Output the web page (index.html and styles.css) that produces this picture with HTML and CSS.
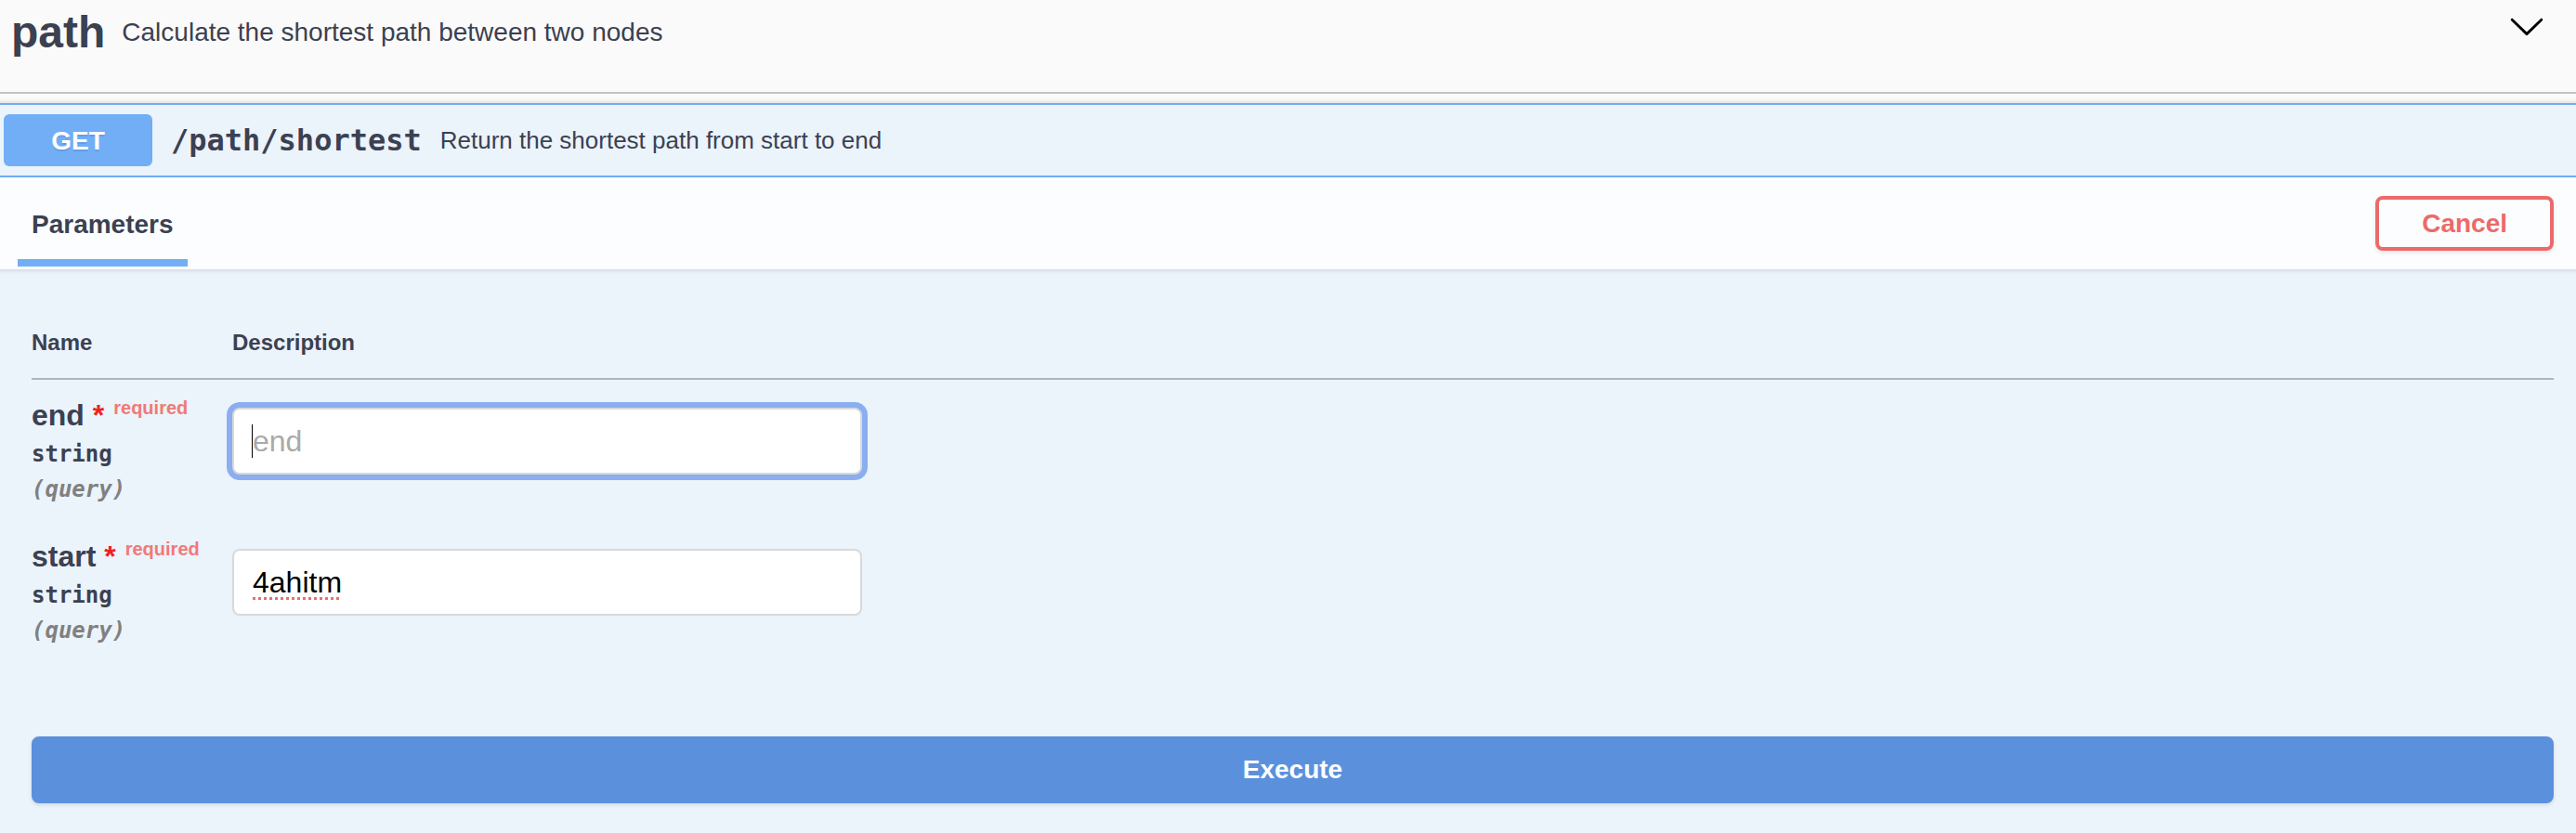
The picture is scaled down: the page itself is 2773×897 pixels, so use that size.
FILE: index.html
```html
<!DOCTYPE html>
<html lang="en">
<head>
<meta charset="utf-8">
<title>path - Swagger</title>
<link rel="stylesheet" href="styles.css">
</head>
<body>
  <section class="tag">
    <h3 class="tag-title">
      <span class="tag-name">path</span>
      <small class="tag-desc">Calculate the shortest path between two nodes</small>
    </h3>
    <svg class="arrow" width="40" height="40" viewBox="0 0 20 20" aria-hidden="true">
      <path d="M17.418 6.109c.272-.268.709-.268.979 0s.271.701 0 .969l-7.908 7.83c-.27.268-.707.268-.979 0l-7.908-7.83c-.27-.268-.27-.701 0-.969.271-.268.709-.268.979 0L10 13.25l7.418-7.141z"/>
    </svg>
  </section>

  <div class="opblock">
    <div class="summary">
      <span class="method">GET</span>
      <span class="sum-path">/path/shortest</span>
      <span class="sum-desc">Return the shortest path from start to end</span>
    </div>

    <div class="section-header">
      <div class="tab">
        <h4 class="tab-label">Parameters</h4>
        <span class="tab-bar"></span>
      </div>
      <button class="btn-cancel" type="button">Cancel</button>
    </div>

    <div class="table-container">
      <div class="params">
        <div class="th">Name</div>
        <div class="th">Description</div>

        <div class="td">
          <div class="pname">end<span class="req">&nbsp;*</span><span class="req-label">required</span></div>
          <div class="ptype">string</div>
          <div class="pin">(query)</div>
        </div>
        <div class="td">
          <div class="field field-focus">
            <input class="input" type="text" placeholder="end" spellcheck="false">
            <span class="caret"></span>
          </div>
        </div>

        <div class="td">
          <div class="pname">start<span class="req">&nbsp;*</span><span class="req-label">required</span></div>
          <div class="ptype">string</div>
          <div class="pin">(query)</div>
        </div>
        <div class="td">
          <div class="field">
            <input class="input spell" type="text" value="4ahitm" spellcheck="false">
          </div>
        </div>
      </div>
    </div>

    <div class="execute-wrapper">
      <button class="btn-execute" type="button">Execute</button>
    </div>
  </div>
</body>
</html>
```

FILE: styles.css
```css
html, body {
  margin: 0;
  overflow: hidden;
}

body {
  width: 2773px;
  height: 897px;
  background: #fafafa;
  font-family: "Liberation Sans", Arial, sans-serif;
  color: #3b4151;
}

/* ---------- tag header ---------- */
.tag {
  display: flex;
  align-items: flex-start;
  padding: 7px 33px 36px 12px;
  border-bottom: 2px solid #c1c3c7;
}

.tag-title {
  display: flex;
  align-items: center;
  flex: 1;
  height: 56px;
  margin: 0;
}

.tag-name {
  font: bold 48px/56px "Liberation Sans", Arial, sans-serif;
}

.tag-desc {
  margin-left: 18px;
  font: 28px/32px "Liberation Sans", Arial, sans-serif;
}

.arrow {
  flex: none;
  margin-top: 1px;
  fill: #000;
}

/* ---------- operation block ---------- */
.opblock {
  margin: 10px -18px 0 -8px;
  border: 2px solid #71aef6;
  background: #ebf3fb;
  box-shadow: 0 0 6px rgba(0, 0, 0, .19);
}

.summary {
  display: flex;
  align-items: center;
  padding: 10px;
  border-bottom: 2px solid #71aef6;
}

.method {
  min-width: 160px;
  padding: 13px 0 11px;
  border-radius: 6px;
  background: #71aef6;
  color: #fff;
  text-align: center;
  font: bold 28px/32px "Liberation Sans", Arial, sans-serif;
  text-shadow: 0 2px 0 rgba(0, 0, 0, .1);
}

.sum-path {
  padding: 0 20px;
  font: bold 32px/40px "DejaVu Sans Mono", monospace;
}

.sum-desc {
  font: 26px/30px "Liberation Sans", Arial, sans-serif;
}

/* ---------- section header ---------- */
.section-header {
  display: flex;
  align-items: center;
  padding: 0 40px;
  background: rgba(255, 255, 255, .8);
  box-shadow: 0 2px 4px rgba(0, 0, 0, .1);
}

.tab {
  display: flex;
  flex-direction: column;
  align-items: center;
  padding: 35px 0 3px;
}

.tab-label {
  margin: 0;
  font: bold 28px/32px "Liberation Sans", Arial, sans-serif;
}

.tab-bar {
  display: block;
  width: 120%;
  height: 8px;
  margin-top: 21px;
  background: #71aef6;
}

.btn-cancel {
  margin-left: auto;
  padding: 10px 46px;
  border: 4px solid #ec6a6a;
  border-radius: 8px;
  background: transparent;
  color: #ec6a6a;
  font: bold 28px/31px "Liberation Sans", Arial, sans-serif;
  box-shadow: 0 2px 4px rgba(0, 0, 0, .1);
}

/* ---------- parameters table ---------- */
.table-container {
  padding: 40px 40px 40px;
}

.params {
  display: grid;
  grid-template-columns: 216px 1fr;
}

.th {
  padding: 25px 0 24px;
  border-bottom: 2px solid #aeb5c1;
  font: bold 24px/28px "Liberation Sans", Arial, sans-serif;
}

.td {
  padding: 20px 0;
}

.pname {
  font: bold 32px/36px "Liberation Sans", Arial, sans-serif;
}

.req {
  color: #f0221e;
}

.req-label {
  padding-left: 10px;
  font-size: 20px;
  line-height: 20px;
  vertical-align: 12px;
  color: #f07a76;
}

.ptype {
  padding: 10px 0;
  font: bold 24px/28px "DejaVu Sans Mono", monospace;
}

.pin {
  font: italic bold 24px/28px "DejaVu Sans Mono", monospace;
  color: #808080;
}

.field {
  position: relative;
  width: 678px;
  margin-top: 10px;
  border-radius: 8px;
}

.input {
  display: block;
  box-sizing: border-box;
  width: 100%;
  height: 72px;
  margin: 0;
  padding: 16px 20px;
  border: 2px solid #d9d9d9;
  border-radius: 8px;
  background: #fff;
  color: #000;
  font: 32px/36px "Liberation Sans", Arial, sans-serif;
  outline: none;
}

.input::placeholder {
  color: #a9a9a9;
}

.field-focus .input {
  box-shadow: 0 0 0 6px #8aaef0;
}

.caret {
  position: absolute;
  left: 21px;
  top: 18px;
  width: 1px;
  height: 36px;
  background: #000;
}

.spell {
  text-decoration: underline dotted #e8706c;
  text-decoration-thickness: 3px;
  text-underline-offset: 5px;
}

/* ---------- execute ---------- */
.execute-wrapper {
  padding: 40px;
}

.btn-execute {
  display: block;
  width: 100%;
  padding: 16px 40px;
  border: 4px solid #5b91dc;
  border-radius: 8px;
  background: #5b91dc;
  color: #fff;
  font: bold 28px/32px "Liberation Sans", Arial, sans-serif;
  box-shadow: 0 2px 4px rgba(0, 0, 0, .1);
}
```
